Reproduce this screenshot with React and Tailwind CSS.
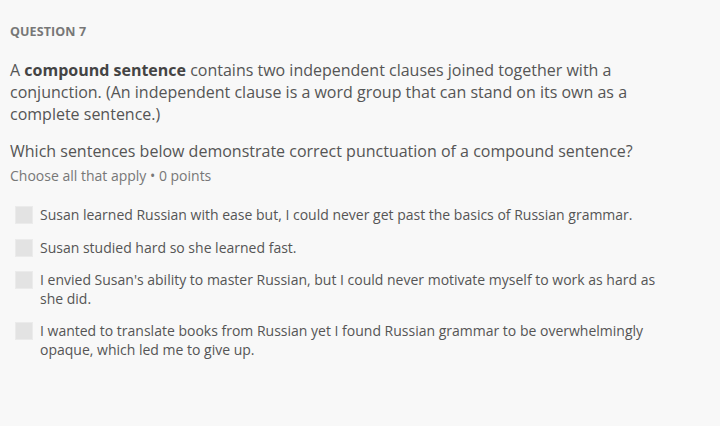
const OPTIONS = [
  'Susan learned Russian with ease but, I could never get past the basics of Russian grammar.',
  'Susan studied hard so she learned fast.',
  "I envied Susan's ability to master Russian, but I could never motivate myself to work as hard as she did.",
  'I wanted to translate books from Russian yet I found Russian grammar to be overwhelmingly opaque, which led me to give up.',
]

export default function App() {
  return (
    <div className="w-[720px] h-[426px] bg-[#f8f8f8] text-[#555] px-[10px] pt-[24px]" style={{ fontFamily: '"Open Sans", sans-serif' }}>
      <div className="w-[662px]">
        <div className="text-[12.5px] font-bold text-[#777] leading-[16px] tracking-[0.1px]">QUESTION 7</div>
        <p className="mt-[19px] text-[16px] leading-[22px]">
          A <b className="font-bold text-[#444]">compound sentence</b> contains two independent clauses joined together with a
          conjunction. (An independent clause is a word group that can stand on its own as a
          complete sentence.)
        </p>
        <p className="mt-[15px] text-[16px] leading-[22px]">Which sentences below demonstrate correct punctuation of a compound sentence?</p>
        <p className="mt-[4px] text-[14px] leading-[20px] text-[#777]">Choose all that apply • 0 points</p>
        <div className="mt-[20px] flex flex-col gap-[14px]">
          {OPTIONS.map((o, i) => (
            <label key={i} className="flex items-start gap-[7px] pl-[5px]">
              <span className="mt-[0px] w-[18px] h-[18px] shrink-0 bg-[#e3e3e3] border border-[#ebebeb]" />
              <span className="text-[14px] leading-[18.5px]">{o}</span>
            </label>
          ))}
        </div>
      </div>
    </div>
  )
}
